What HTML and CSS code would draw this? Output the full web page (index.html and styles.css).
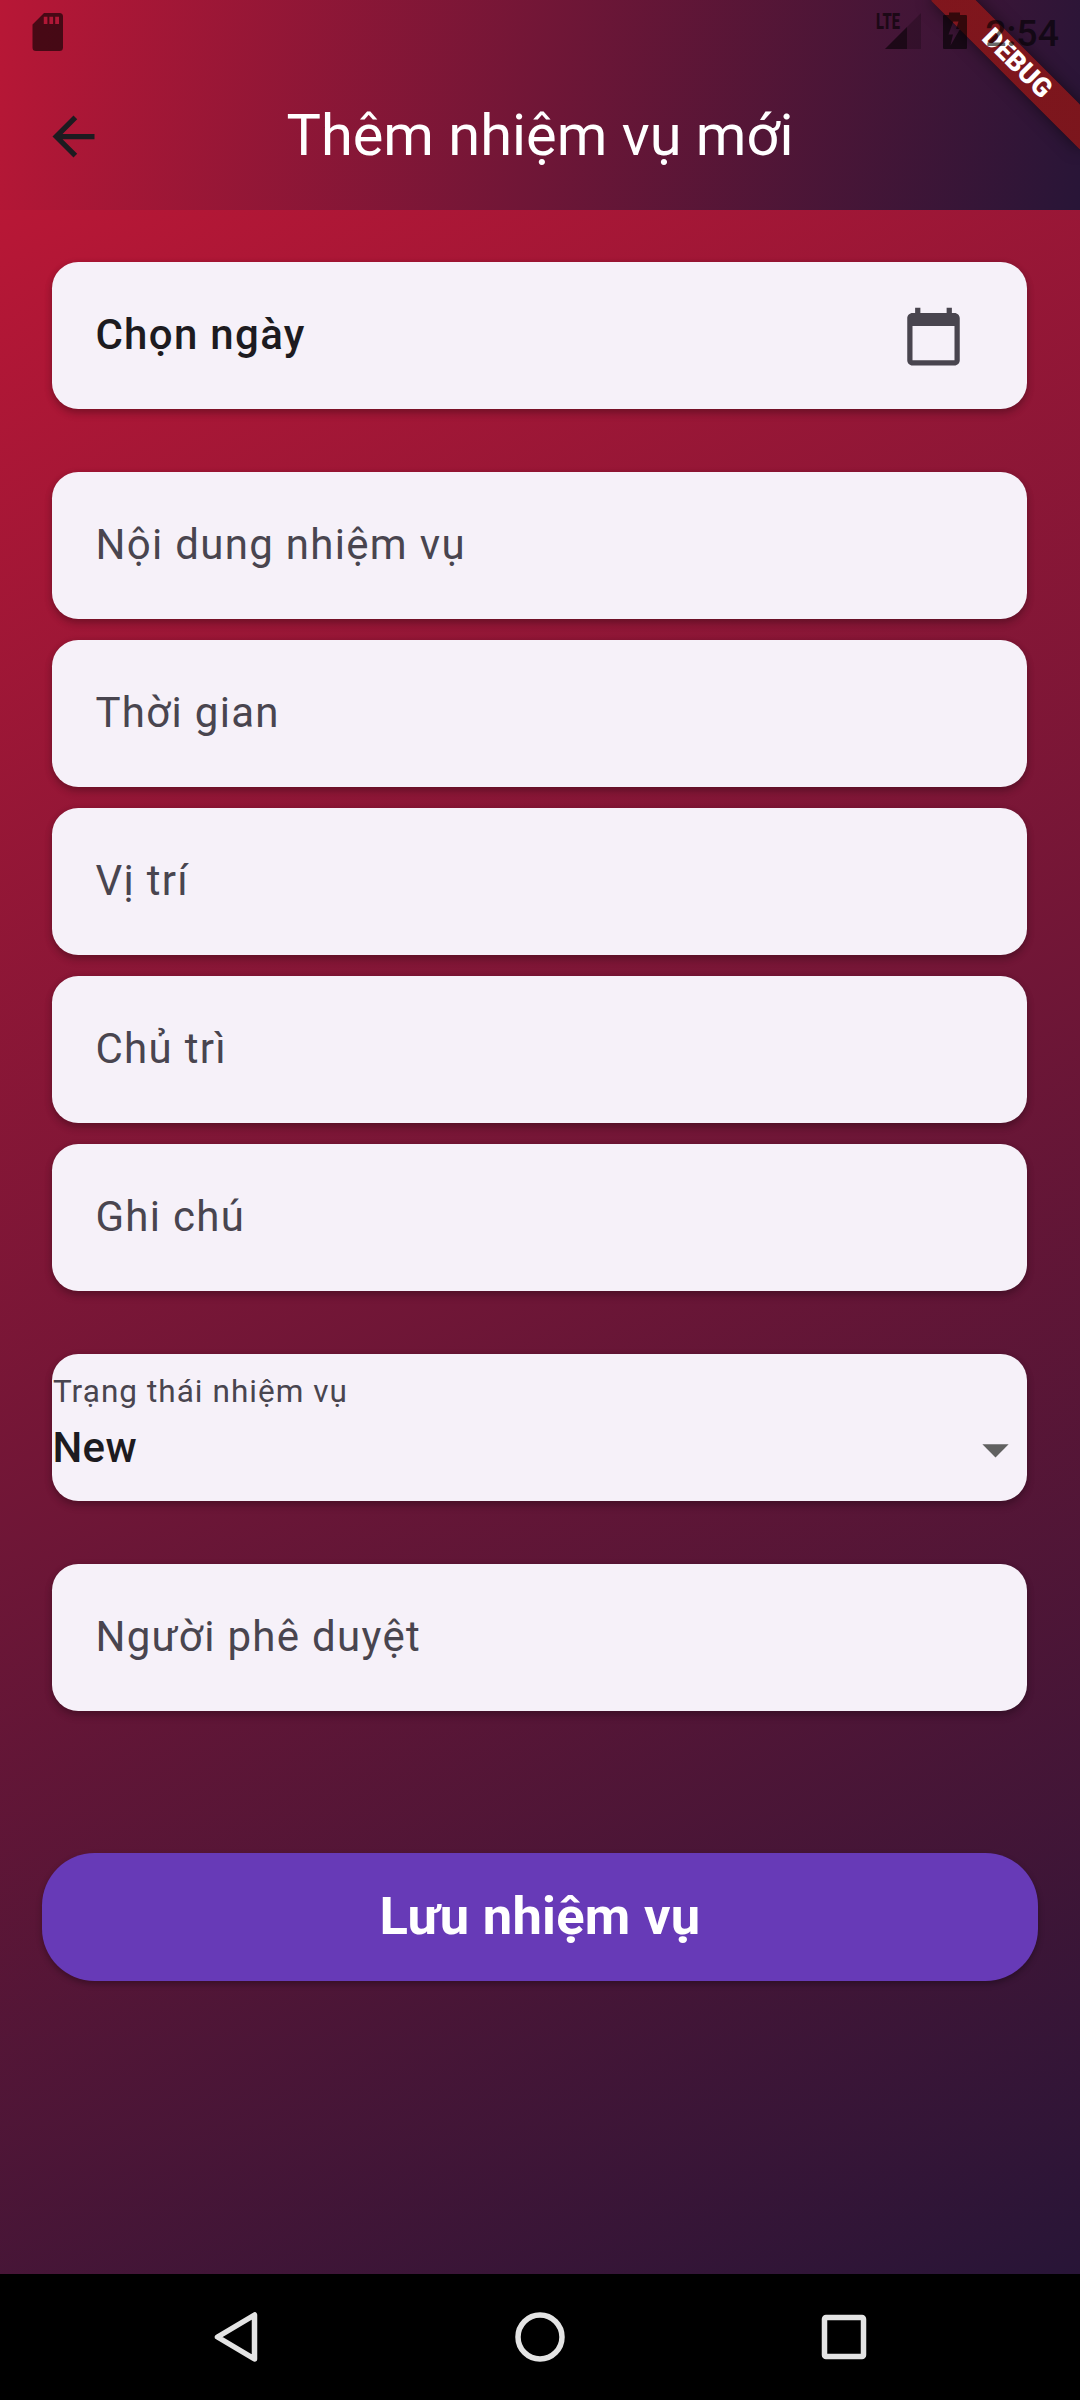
FILE: index.html
```html
<!DOCTYPE html>
<html lang="vi">
<head>
<meta charset="utf-8">
<title>Thêm nhiệm vụ mới</title>
<link rel="stylesheet" href="styles.css">
</head>
<body>
<div class="screen">
  <header class="appbar">
    <div class="status">
      <svg class="sd" width="32" height="40" viewBox="0 0 32 40"><path fill-rule="evenodd" d="M12 1H27.500Q31 1 31 4.500V35.500Q31 39 27.500 39H4Q.5 39 .5 35.500V12.500ZM11.800 4.700V12H15.400V4.700ZM17.400 4.700V12H21.100V4.700ZM23.200 4.700V12H27V4.700Z"/></svg>
      <svg class="signal" width="48" height="40" viewBox="0 0 48 40"><text x="1" y="17" textLength="24" lengthAdjust="spacingAndGlyphs" class="lte">LTE</text><path d="M46 1V37H10Z" opacity=".35"/><path d="M32 15V37H10Z" opacity=".75"/></svg>
      <svg class="battery" width="26" height="40" viewBox="0 0 26 40"><path fill-rule="evenodd" d="M7 .5H18V3H24Q25 3 25 4V36Q25 37 24 37H2Q1 37 1 36V4Q1 3 2 3H7ZM11.300 9.500L6.500 22.500H11L8.500 33.500L18 17H14L16.500 9.500Z"/></svg>
      <span class="time">2:54</span>
    </div>
    <div class="toolbar">
      <svg class="back" viewBox="0 0 24 24"><path d="M20 11H7.830l5.590-5.590L12 4l-8 8 8 8 1.410-1.410L7.830 13H20z"/></svg>
      <h1 class="title">Thêm nhiệm vụ mới</h1>
    </div>
    <div class="debug">DEBUG</div>
  </header>
  <main class="form">
    <div class="card date"><span>Chọn ngày</span>
      <svg class="calendar" viewBox="0 0 24 24"><path d="M20 3h-1V1h-2v2H7V1H5v2H4c-1.100 0-2 .9-2 2v16c0 1.100.9 2 2 2h16c1.100 0 2-.9 2-2V5c0-1.100-.9-2-2-2zm0 18H4V8h16v13z"/></svg>
    </div>
    <div class="group">
      <div class="card"><span>Nội dung nhiệm vụ</span></div>
      <div class="card"><span>Thời gian</span></div>
      <div class="card"><span>Vị trí</span></div>
      <div class="card"><span>Chủ trì</span></div>
      <div class="card"><span>Ghi chú</span></div>
    </div>
    <div class="card select">
      <span class="label">Trạng thái nhiệm vụ</span>
      <div class="value"><span>New</span><svg class="caret" viewBox="0 0 24 24"><path d="M7 10l5 5 5-5z"/></svg></div>
    </div>
    <div class="card"><span>Người phê duyệt</span></div>
    <button class="save">Lưu nhiệm vụ</button>
  </main>
  <nav class="navbar">
    <svg width="50" height="56" viewBox="0 0 50 56"><path d="M44.500 6V50L7.500 28Z"/></svg>
    <svg width="56" height="56" viewBox="0 0 56 56"><circle cx="28" cy="28" r="22"/></svg>
    <svg width="50" height="56" viewBox="0 0 50 56"><rect x="5.500" y="8.500" width="39" height="39" rx="1.500"/></svg>
  </nav>
</div>
</body>
</html>
```

FILE: styles.css
```css
* { box-sizing: border-box; }
body { margin: 0; font-family: Roboto, sans-serif; }
.screen { width: 1080px; height: 2400px; display: flex; flex-direction: column; overflow: hidden; }
.appbar { height: 210px; flex: none; position: relative; overflow: hidden; background: linear-gradient(101deg, #b81736, #281537); }
.status { position: relative; z-index: 2; height: 63px; padding: 12px 21px 0 32px; display: flex; align-items: flex-start; fill: rgba(0,0,0,.6); color: rgba(0,0,0,.6); }
.signal { margin-left: auto; margin-right: 19px; overflow: visible; }
.battery { margin-right: 17px; }
.lte { font: 900 22px Roboto, sans-serif; }
.time { font-size: 37.5px; font-weight: 500; line-height: 44px; margin-top: -1px; }
.toolbar { height: 147px; display: grid; grid-template-columns: 105px 1fr 105px; align-items: center; }
.back { width: 63px; height: 63px; margin-left: 42px; fill: #1d1b20; }
.title { margin: 0; padding-bottom: 3px; text-align: center; color: #fff; font-size: 57.750px; font-weight: 400; line-height: 74px; }
.debug { position: absolute; z-index: 1; width: 210px; height: 31.500px; left: 975px; top: 73.500px; transform: rotate(45deg); transform-origin: 105px -73.500px; font-size: 26.775px; font-weight: 900; line-height: 31.500px; text-align: center; color: #fff; background: linear-gradient(rgba(183,28,28,.63), rgba(183,28,28,.63)), rgba(0,0,0,.45); box-shadow: 0 0 15.750px rgba(0,0,0,.5); }
.form { height: 2064px; flex: none; padding: 52.400px 42px 0; display: flex; flex-direction: column; gap: 63px; background: linear-gradient(152.380deg, #b81736, #281537); }
.group { display: flex; flex-direction: column; gap: 21px; }
.card { margin: 0 10.600px 0 10.400px; height: 147px; flex: none; display: flex; align-items: center; padding: 0 62.500px 3px 43px; border-radius: 26.250px; background: #f6f1f9; color: #49454f; font-size: 42px; letter-spacing: 1.3125px; box-shadow: 0 2.600px 7px rgba(0,0,0,.22), 0 5px 10px rgba(0,0,0,.1); }
.date { justify-content: space-between; color: #1d1b20; font-weight: 500; }
.calendar { width: 63px; height: 63px; margin-top: 5px; fill: #49454f; }
.select { flex-direction: column; align-items: stretch; padding: 18px 0 0; }
.label { font-size: 31.500px; line-height: 40px; letter-spacing: 1.050px; padding-left: .5px; }
.value { display: flex; justify-content: space-between; align-items: center; height: 63px; margin-top: 4px; color: #1d1b20; font-weight: 500; letter-spacing: .4px; }
.caret { width: 63px; height: 63px; margin-top: 3px; fill: #616161; }
.save { margin-top: 78.500px; height: 128.600px; flex: none; border: 0; padding: 0 0 3px; border-radius: 52.500px; background: #673ab7; color: #fff; font: 700 52.500px Roboto, sans-serif; letter-spacing: .2625px; box-shadow: 0 3px 6px rgba(0,0,0,.3); }
.navbar { height: 126px; flex: none; background: #000; display: flex; justify-content: space-between; align-items: center; padding: 0 211px 0 210px; fill: none; stroke: #e4e4e4; stroke-width: 5.500px; stroke-linejoin: round; }
```
